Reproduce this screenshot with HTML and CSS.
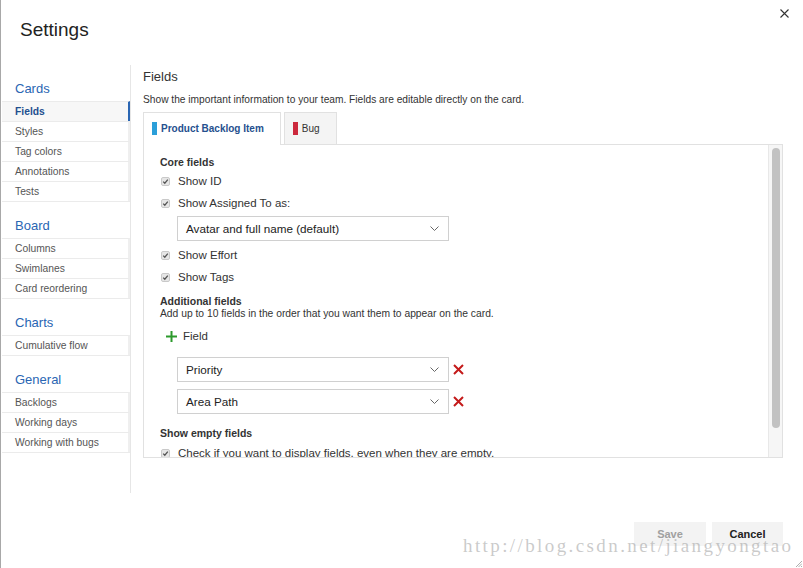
FILE: index.html
```
<!DOCTYPE html>
<html>
<head>
<meta charset="utf-8">
<title>Settings</title>
<link rel="stylesheet" href="styles.css">
</head>
<body>
<div class="dialog">
  <div class="dlg-head">
    <h1>Settings</h1>
    <svg class="close" width="9" height="9" viewBox="0 0 9 9"><path d="M0.5 0.5L8.5 8.5M8.5 0.5L0.5 8.5" stroke="#333" stroke-width="1.1" fill="none"/></svg>
  </div>

  <div class="dlg-body">
    <div class="nav">
      <h3>Cards</h3>
      <ul>
        <li class="current">Fields</li>
        <li>Styles</li>
        <li>Tag colors</li>
        <li>Annotations</li>
        <li>Tests</li>
      </ul>
      <h3>Board</h3>
      <ul>
        <li>Columns</li>
        <li>Swimlanes</li>
        <li>Card reordering</li>
      </ul>
      <h3>Charts</h3>
      <ul>
        <li>Cumulative flow</li>
      </ul>
      <h3>General</h3>
      <ul>
        <li>Backlogs</li>
        <li>Working days</li>
        <li>Working with bugs</li>
      </ul>
    </div>

    <div class="main">
      <h2>Fields</h2>
      <p class="desc">Show the important information to your team. Fields are editable directly on the card.</p>

      <div class="tabs">
        <div class="tab active"><span class="bar blue"></span>Product Backlog Item</div>
        <div class="tab"><span class="bar red"></span>Bug</div>
      </div>

      <div class="panel">
        <div class="panel-body">
          <div class="sec-title">Core fields</div>
          <div class="check"><svg class="cb" width="9" height="9" viewBox="0 0 9 9"><rect x="0.5" y="0.5" width="8" height="8" rx="1.5" fill="#e6e6e6" stroke="#c9c9c9"/><path d="M2.2 4.6L3.8 6.2L6.8 2.6" stroke="#555" stroke-width="1.3" fill="none"/></svg>Show ID</div>
          <div class="check"><svg class="cb" width="9" height="9" viewBox="0 0 9 9"><rect x="0.5" y="0.5" width="8" height="8" rx="1.5" fill="#e6e6e6" stroke="#c9c9c9"/><path d="M2.2 4.6L3.8 6.2L6.8 2.6" stroke="#555" stroke-width="1.3" fill="none"/></svg>Show Assigned To as:</div>
          <div class="select first">Avatar and full name (default)<svg class="chev" width="9" height="5" viewBox="0 0 9 5"><path d="M0.5 0.5L4.5 4.5L8.5 0.5" stroke="#666" stroke-width="1" fill="none"/></svg></div>
          <div class="check gap"><svg class="cb" width="9" height="9" viewBox="0 0 9 9"><rect x="0.5" y="0.5" width="8" height="8" rx="1.5" fill="#e6e6e6" stroke="#c9c9c9"/><path d="M2.2 4.6L3.8 6.2L6.8 2.6" stroke="#555" stroke-width="1.3" fill="none"/></svg>Show Effort</div>
          <div class="check"><svg class="cb" width="9" height="9" viewBox="0 0 9 9"><rect x="0.5" y="0.5" width="8" height="8" rx="1.5" fill="#e6e6e6" stroke="#c9c9c9"/><path d="M2.2 4.6L3.8 6.2L6.8 2.6" stroke="#555" stroke-width="1.3" fill="none"/></svg>Show Tags</div>

          <div class="sec-title add">Additional fields</div>
          <div class="sub">Add up to 10 fields in the order that you want them to appear on the card.</div>
          <div class="add-field"><svg width="11" height="11" viewBox="0 0 11 11"><path d="M5.5 0V11M0 5.5H11" stroke="#2c9a2c" stroke-width="2" fill="none"/></svg>Field</div>

          <div class="field-row prio">
            <div class="select">Priority<svg class="chev" width="9" height="5" viewBox="0 0 9 5"><path d="M0.5 0.5L4.5 4.5L8.5 0.5" stroke="#666" stroke-width="1" fill="none"/></svg></div>
            <svg class="remove" width="11" height="11" viewBox="0 0 11 11"><path d="M1 1L10 10M10 1L1 10" stroke="#c41a1a" stroke-width="2" fill="none"/></svg>
          </div>
          <div class="field-row">
            <div class="select">Area Path<svg class="chev" width="9" height="5" viewBox="0 0 9 5"><path d="M0.5 0.5L4.5 4.5L8.5 0.5" stroke="#666" stroke-width="1" fill="none"/></svg></div>
            <svg class="remove" width="11" height="11" viewBox="0 0 11 11"><path d="M1 1L10 10M10 1L1 10" stroke="#c41a1a" stroke-width="2" fill="none"/></svg>
          </div>

          <div class="sec-title empty">Show empty fields</div>
          <div class="check tight"><svg class="cb" width="9" height="9" viewBox="0 0 9 9"><rect x="0.5" y="0.5" width="8" height="8" rx="1.5" fill="#e6e6e6" stroke="#c9c9c9"/><path d="M2.2 4.6L3.8 6.2L6.8 2.6" stroke="#555" stroke-width="1.3" fill="none"/></svg>Check if you want to display fields, even when they are empty.</div>
        </div>
        <div class="scroll"><div class="thumb"></div></div>
      </div>
    </div>
  </div>

  <div class="dlg-foot">
    <button class="btn save">Save</button>
    <button class="btn">Cancel</button>
  </div>

  <div class="watermark">http://blog.csdn.net/jiangyongtao</div>
  <svg class="grip" width="7" height="7" viewBox="0 0 7 7"><path d="M7 1L1 7M7 3.5L3.5 7M7 6L6 7" stroke="#999" stroke-width="0.8" fill="none"/></svg>
</div>
</body>
</html>
```

FILE: styles.css
```
html,body,div,ul,li,h1,h2,h3,p{margin:0;padding:0;}
ul{list-style-type:none;}
body{background:#fff;font-family:"Liberation Sans",Arial,sans-serif;color:#333;}
.dialog{position:relative;width:803px;height:568px;box-sizing:border-box;border-left:1px solid #a8a8a8;background:#fff;overflow:hidden;}

/* header */
.dlg-head{display:flex;justify-content:space-between;align-items:flex-start;height:65px;box-sizing:border-box;padding:9px 14px 0 19px;}
.dlg-head h1{margin-top:9px;font-size:19px;line-height:24px;font-weight:normal;color:#222;}
.close{display:block;}

/* body */
.dlg-body{display:flex;height:428px;}
.nav{width:129px;flex:none;border-right:1px solid #e6e6e6;}
.nav h3{padding-top:14px;margin-bottom:2px;font-size:13px;line-height:20px;font-weight:normal;color:#2a66b3;padding-left:14px;}
.nav ul{margin-left:1px;border-bottom:1px solid #ebebeb;}
.nav li{height:20px;box-sizing:border-box;border-top:1px solid #ebebeb;border-right:2px solid #efefef;padding-left:13px;font-size:10.3px;line-height:19px;color:#555;}
.nav li.current{background:#f7f7f7;border-right-color:#2a66b3;color:#1f4f8f;font-weight:bold;}

.main{flex:1;padding:2px 20px 0 12px;}
.main h2{font-size:13px;line-height:20px;font-weight:normal;color:#333;}
.desc{margin:6px 0 5px;font-size:10.2px;line-height:14px;color:#333;}

.tabs{display:flex;align-items:flex-start;gap:3px;height:32px;}
.tab{display:flex;align-items:center;gap:4px;height:32px;box-sizing:border-box;padding:0 16px 0 8px;border:1px solid #e1e1e1;border-bottom:0;background:#f4f4f4;font-size:10px;color:#333;}
.tab.active{position:relative;z-index:1;height:33px;padding-bottom:1px;background:#fff;color:#25508e;font-weight:bold;}
.bar{display:block;width:5px;height:13px;}
.bar.blue{background:#2b9fd9;}
.bar.red{background:#cc293d;}

.panel{display:flex;height:314px;box-sizing:border-box;border:1px solid #e1e1e1;overflow:hidden;}
.panel-body{flex:1;padding:9px 16px 0;overflow:hidden;}
.scroll{width:14px;flex:none;box-sizing:border-box;padding:3px;border-left:1px solid #e8e8e8;background:#f6f6f6;}
.thumb{width:8px;height:280px;border-radius:4px;background:#c2c2c2;}

.sec-title{font-size:10.5px;line-height:16px;font-weight:bold;color:#333;}
.sec-title.add{margin-top:7px;line-height:13px;}
.sec-title.empty{margin-top:12px;line-height:14px;}
.sub{font-size:10.3px;line-height:11px;color:#333;}

.check{display:flex;align-items:center;height:22px;font-size:11.5px;color:#333;white-space:nowrap;}
.check.gap{margin-top:3px;}
.check.tight{margin-top:2px;}
.cb{flex:none;margin:0 8px 0 1px;}

.select{display:flex;align-items:center;justify-content:space-between;width:272px;height:25px;box-sizing:border-box;padding:0 9px 0 8px;border:1px solid #d0d0d0;background:#fff;font-size:11.7px;color:#222;}
.select.first{margin:2px 0 0 17px;}

.add-field{display:flex;align-items:center;gap:6px;height:20px;margin:7px 0 0 6px;font-size:11.5px;color:#333;}

.field-row{display:flex;align-items:center;gap:4px;margin:7px 0 0 17px;}
.field-row.prio{margin-top:11px;}
.remove{display:block;}

/* footer */
.dlg-foot{display:flex;justify-content:flex-end;gap:6px;padding:29px 20px 0 0;}
.btn{width:71px;height:24px;border:0;background:#f3f3f3;font-family:"Liberation Sans",Arial,sans-serif;font-size:11px;font-weight:bold;color:#222;padding:0;}
.btn.save{width:72px;color:#a0a0a0;}

.watermark{position:absolute;left:462px;top:535px;font-family:"Liberation Serif","Times New Roman",serif;font-size:19px;line-height:22px;letter-spacing:2.4px;color:rgba(150,150,150,0.5);white-space:nowrap;}
.grip{position:absolute;right:1px;bottom:1px;}
```
